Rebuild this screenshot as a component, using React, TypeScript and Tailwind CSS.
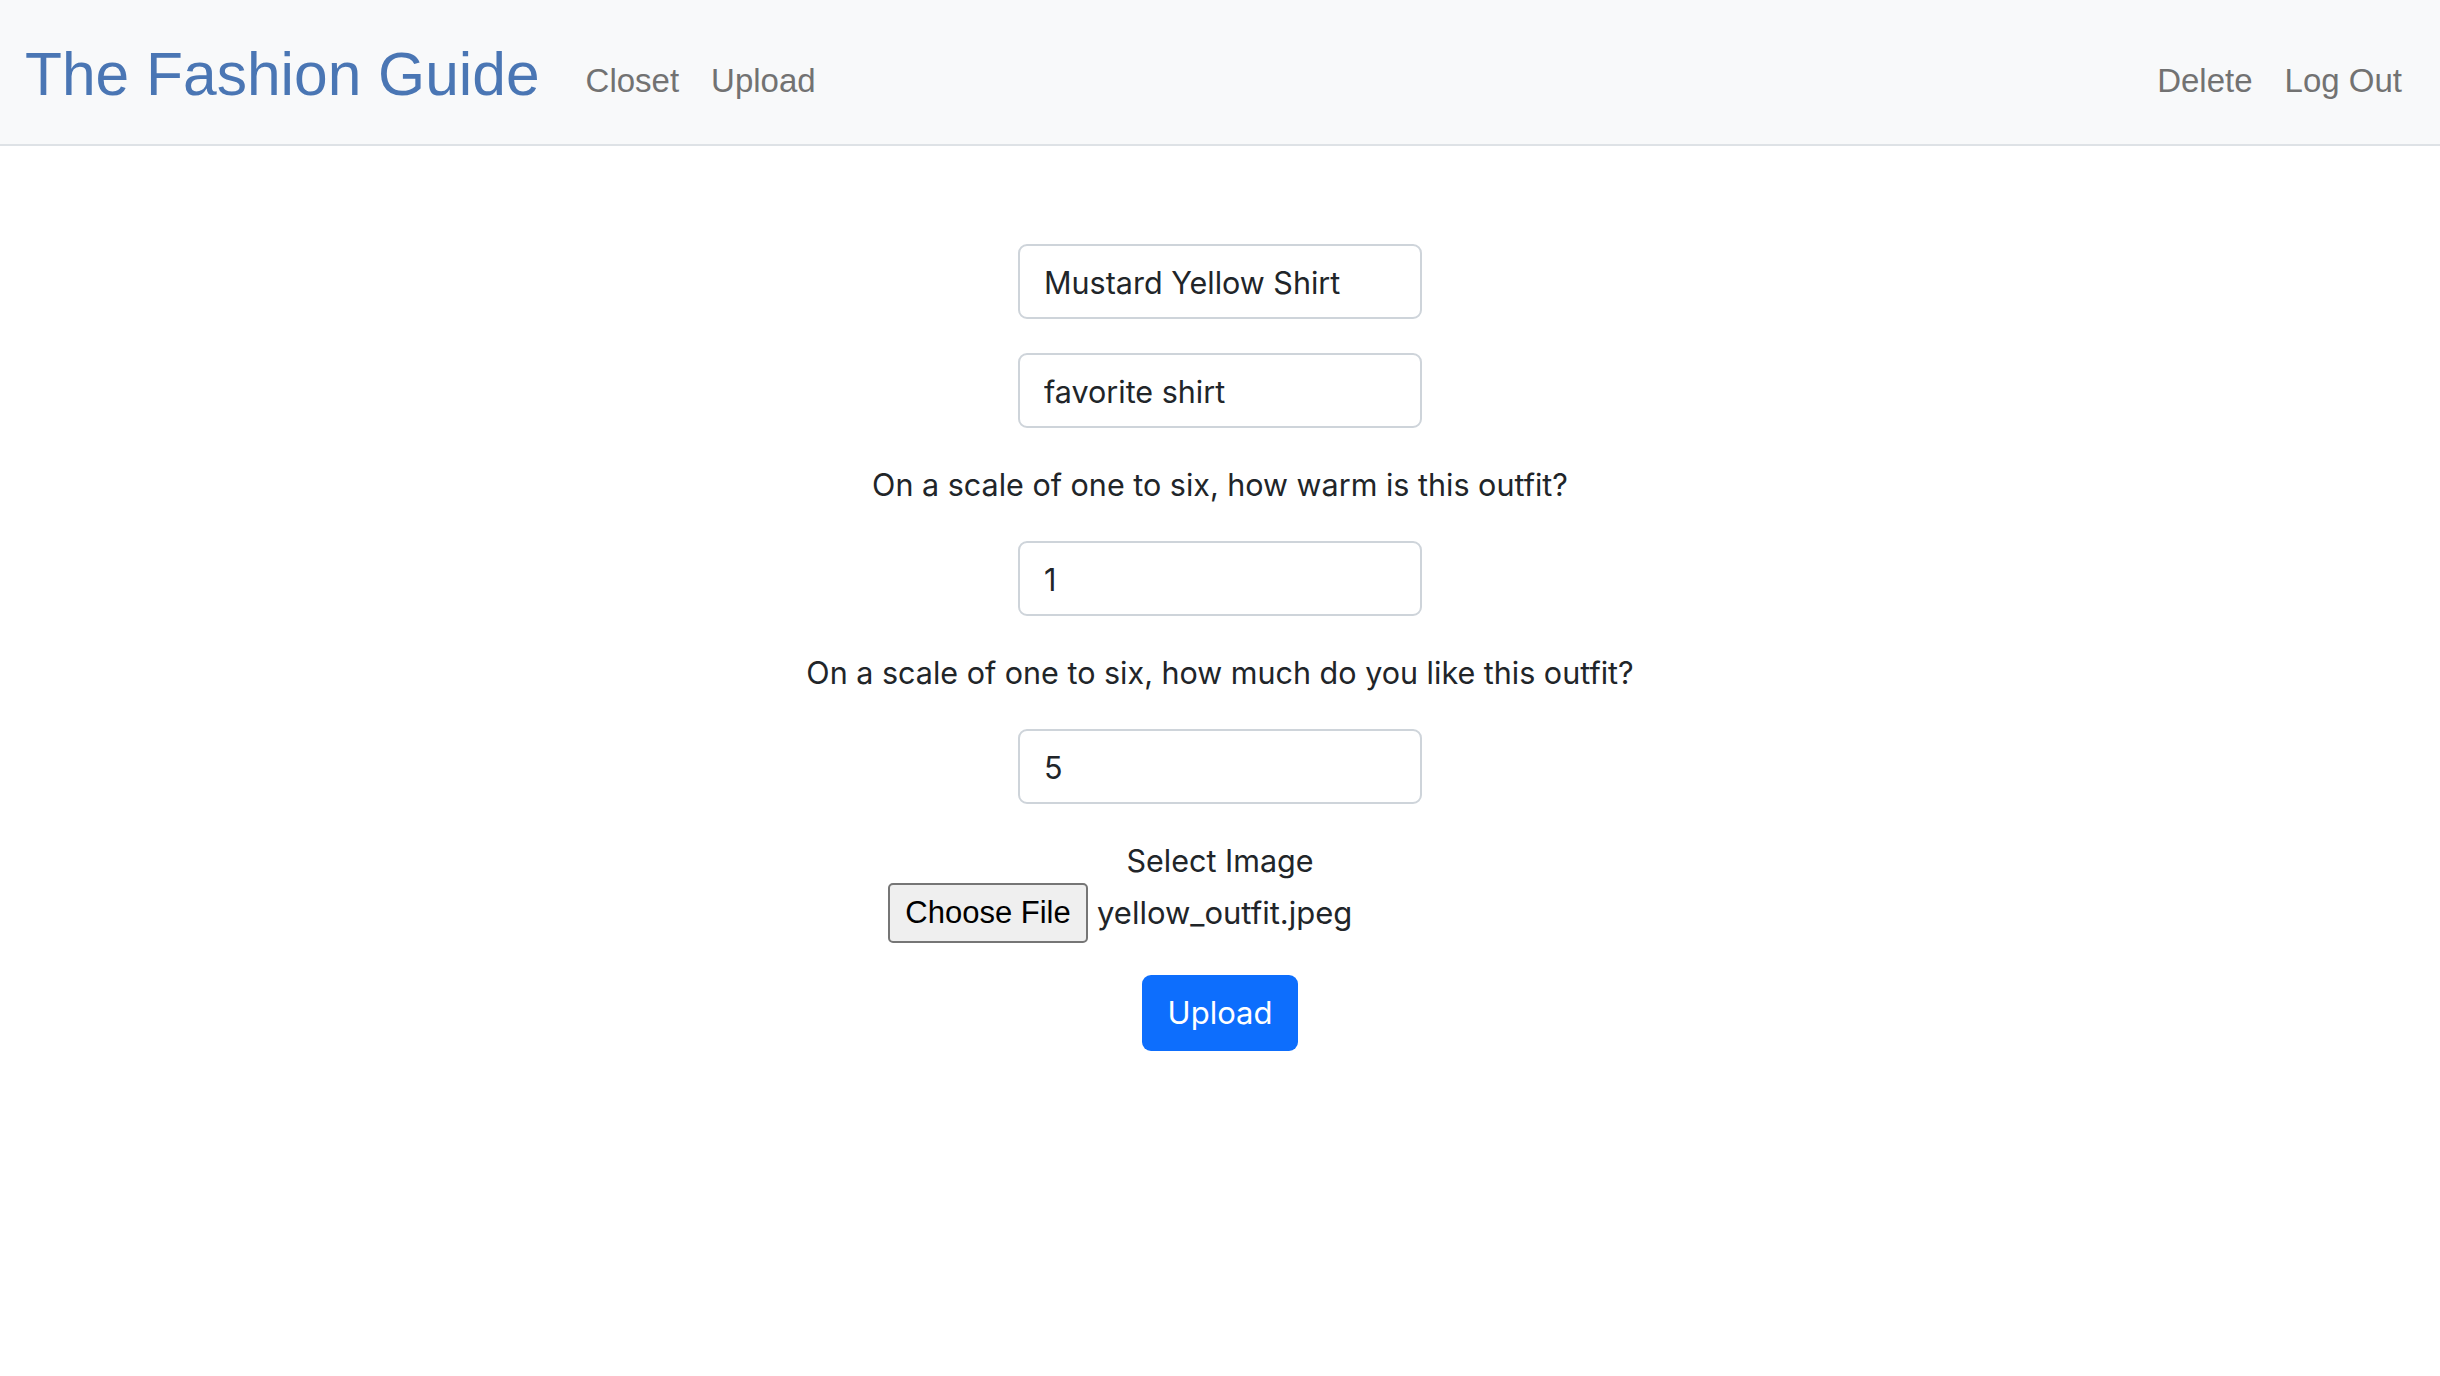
import React from "react";

const navFont = { fontFamily: '"Liberation Sans", Arial, sans-serif' };

const Field = ({ value }: { value: string }) => (
  <input
    readOnly
    value={value}
    className="w-[404px] h-[75px] rounded-[9px] border-2 border-[#ced4da] bg-white px-[24px] pt-[2px] text-[30.5px] text-[#212529] outline-none"
  />
);

const Label = ({ children }: { children: React.ReactNode }) => (
  <p className="text-[30.5px] leading-[45px] text-[#212529]">{children}</p>
);

export default function App() {
  return (
    <div className="min-h-screen bg-white font-['Inter',sans-serif]">
      <nav
        className="h-[146px] flex items-center bg-[#f8f9fa] border-b-2 border-[#dee2e6] pl-[25px] pr-[38px]"
        style={navFont}
      >
        <a className="text-[60.5px] leading-none text-[#4a76b4] mr-[46px] pt-[5px]">
          The Fashion Guide
        </a>
        <div className="flex items-center gap-[32px] pt-[17px] text-[33px] text-[#727272]">
          <a>Closet</a>
          <a>Upload</a>
        </div>
        <div className="ml-auto flex items-center gap-[32px] pt-[17px] text-[33px] text-[#727272]">
          <a>Delete</a>
          <a>Log Out</a>
        </div>
      </nav>

      <main className="flex flex-col items-center pt-[98px] gap-[34px]">
        <Field value="Mustard Yellow Shirt" />
        <Field value="favorite shirt" />
        <Label>On a scale of one to six, how warm is this outfit?</Label>
        <Field value="1" />
        <Label>On a scale of one to six, how much do you like this outfit?</Label>
        <Field value="5" />
        <div className="flex flex-col items-center">
          <Label>Select Image</Label>
          <div className="w-[664px] flex items-center gap-[9px]">
            <span
              className="w-[200px] h-[60px] flex items-center justify-center rounded-[5px] border-2 border-[#767676] bg-[#efefef] text-[31px] text-black"
              style={navFont}
            >
              Choose File
            </span>
            <span className="text-[31px] text-[#212529]">yellow_outfit.jpeg</span>
          </div>
        </div>
        <button className="-mt-[2px] w-[156px] h-[76px] rounded-[9px] bg-[#0d6efd] text-white text-[31px]">
          Upload
        </button>
      </main>
    </div>
  );
}
